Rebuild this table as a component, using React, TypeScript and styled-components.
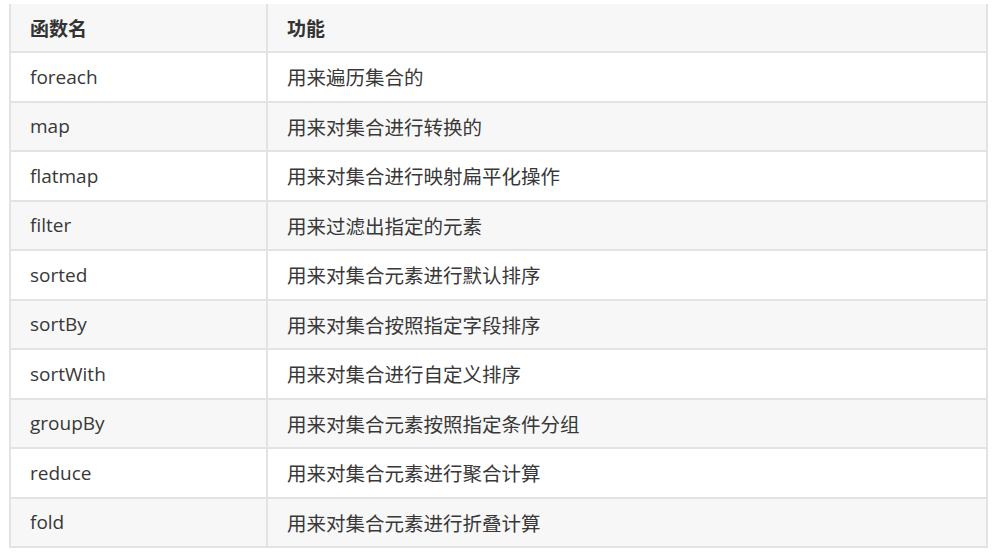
import styled, { createGlobalStyle } from 'styled-components'

const rows: [string, string][] = [
  ['foreach', '用来遍历集合的'],
  ['map', '用来对集合进行转换的'],
  ['flatmap', '用来对集合进行映射扁平化操作'],
  ['filter', '用来过滤出指定的元素'],
  ['sorted', '用来对集合元素进行默认排序'],
  ['sortBy', '用来对集合按照指定字段排序'],
  ['sortWith', '用来对集合进行自定义排序'],
  ['groupBy', '用来对集合元素按照指定条件分组'],
  ['reduce', '用来对集合元素进行聚合计算'],
  ['fold', '用来对集合元素进行折叠计算'],
]

export default function App() {
  return (
    <>
      <GlobalStyle />
      <Page>
        <Table>
          <thead>
            <tr>
              <HeadCell $first>函数名</HeadCell>
              <HeadCell>功能</HeadCell>
            </tr>
          </thead>
          <tbody>
            {rows.map(([name, desc]) => (
              <Row key={name}>
                <NameCell>{name}</NameCell>
                <DescCell>{desc}</DescCell>
              </Row>
            ))}
          </tbody>
        </Table>
      </Page>
    </>
  )
}

const GlobalStyle = createGlobalStyle`
  body {
    margin: 0;
    background: #fff;
    font-family: "Open Sans", "Noto Sans CJK SC", sans-serif;
    color: #333;
  }
`

const Page = styled.div`
  padding: 4px 10px 0 9px;
`

const Table = styled.table`
  width: 979px;
  border-collapse: collapse;
`

const HeadCell = styled.th<{ $first?: boolean }>`
  width: ${(p) => (p.$first ? '257px' : 'auto')};
  height: 48px;
  padding: 0 0 0 19px;
  text-align: left;
  font-size: 19px;
  font-weight: 700;
  color: #333;
  background: #f7f7f7;
  border: 2px solid #e3e3e6;
  border-top: 0;
  box-sizing: border-box;
`

const Row = styled.tr`
  &:nth-child(even) td {
    background: #f7f7f7;
  }
`

const NameCell = styled.td`
  height: 49.5px;
  padding: 0 0 0 19px;
  font-size: 19px;
  color: #383838;
  border: 2px solid #e3e3e6;
  box-sizing: border-box;
`

const DescCell = styled(NameCell)`
  font-size: 19.5px;
`
